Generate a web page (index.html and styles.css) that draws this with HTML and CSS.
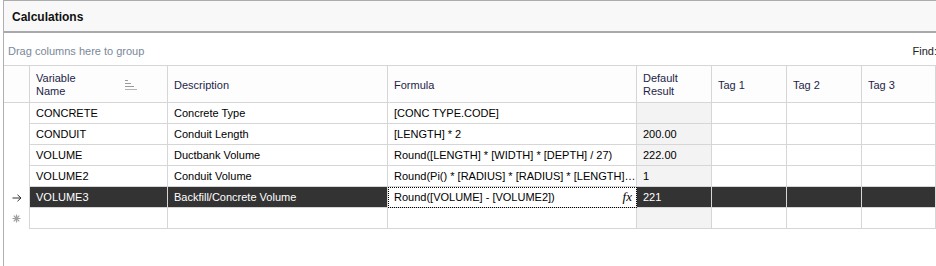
FILE: index.html
```html
<!DOCTYPE html>
<html lang="en">
<head>
  <meta charset="UTF-8" />
  <meta name="viewport" content="width=device-width, initial-scale=1.0" />
  <title>Calculations</title>
  <link rel="stylesheet" href="styles.css">
</head>
<body>
  <div class="panel">
    <div class="panel-title">Calculations</div>
    <div class="group-bar">
      <span class="group-hint">Drag columns here to group</span>
      <span class="find">Find:</span>
    </div>
    <div class="grid">
      <!-- header -->
      <div class="cell ind head"></div>
      <div class="cell head">
        <span>Variable<br />Name</span>
        <svg class="sort-icon" width="12" height="10" viewBox="0 0 12 10">
          <rect x="0" y="0" width="3" height="1" fill="#9a9a9a" />
          <rect x="0" y="3" width="6" height="1" fill="#9a9a9a" />
          <rect x="0" y="6" width="9" height="1" fill="#9a9a9a" />
          <rect x="0" y="9" width="12" height="1" fill="#b4b4b4" />
        </svg>
      </div>
      <div class="cell head">Description</div>
      <div class="cell head">Formula</div>
      <div class="cell head">Default<br />Result</div>
      <div class="cell head">Tag 1</div>
      <div class="cell head">Tag 2</div>
      <div class="cell head">Tag 3</div>

      <div class="cell ind"></div>
      <div class="cell">CONCRETE</div>
      <div class="cell">Concrete Type</div>
      <div class="cell">[CONC TYPE.CODE]</div>
      <div class="cell result"></div>
      <div class="cell"></div>
      <div class="cell"></div>
      <div class="cell"></div>

      <div class="cell ind"></div>
      <div class="cell">CONDUIT</div>
      <div class="cell">Conduit Length</div>
      <div class="cell">[LENGTH] * 2</div>
      <div class="cell result">200.00</div>
      <div class="cell"></div>
      <div class="cell"></div>
      <div class="cell"></div>

      <div class="cell ind"></div>
      <div class="cell">VOLUME</div>
      <div class="cell">Ductbank Volume</div>
      <div class="cell">Round([LENGTH] * [WIDTH] * [DEPTH] / 27)</div>
      <div class="cell result">222.00</div>
      <div class="cell"></div>
      <div class="cell"></div>
      <div class="cell"></div>

      <div class="cell ind"></div>
      <div class="cell">VOLUME2</div>
      <div class="cell">Conduit Volume</div>
      <div class="cell">Round(Pi() * [RADIUS] * [RADIUS] * [LENGTH]…</div>
      <div class="cell result">1</div>
      <div class="cell"></div>
      <div class="cell"></div>
      <div class="cell"></div>

      <div class="cell ind">
        <svg width="10" height="8" viewBox="0 0 10 8">
          <path d="M0.5 4H9M5.5 0.8L9 4L5.5 7.2" fill="none" stroke="#333" stroke-width="1" />
        </svg>
      </div>
      <div class="cell sel">VOLUME3</div>
      <div class="cell sel">Backfill/Concrete Volume</div>
      <div class="cell editing">
        <span>Round([VOLUME] - [VOLUME2])</span>
        <span class="fx">fx</span>
      </div>
      <div class="cell sel">221</div>
      <div class="cell sel"></div>
      <div class="cell sel"></div>
      <div class="cell sel"></div>

      <div class="cell ind last">
        <svg width="9" height="9" viewBox="0 0 9 9">
          <path d="M4.5 0.5V8.5M0.5 4.5H8.5M1.7 1.7L7.3 7.3M7.3 1.7L1.7 7.3" stroke="#a0a0a0" stroke-width="1.2" />
          <circle cx="4.5" cy="4.5" r="2" fill="#a0a0a0" />
        </svg>
      </div>
      <div class="cell"></div>
      <div class="cell"></div>
      <div class="cell"></div>
      <div class="cell result"></div>
      <div class="cell"></div>
      <div class="cell"></div>
      <div class="cell"></div>
    </div>
  </div>
</body>
</html>
```

FILE: styles.css
```css
body {
  margin: 0;
  background: #fff;
  font-family: Tahoma, "Liberation Sans", Arial, sans-serif;
  font-size: 11px;
  color: #000;
  overflow: hidden;
}
.panel {
  margin-left: 3px;
  border-left: 1px solid #b0b0b0;
  height: 266px;
}
.panel-title {
  height: 30px;
  line-height: 32px;
  padding-left: 8px;
  border-top: 1px solid #acacac;
  border-bottom: 2px solid #a9a9a9;
  background: #f8f8f8;
  font-weight: bold;
  font-size: 12px;
  color: #111;
}
.group-bar {
  display: flex;
  align-items: center;
  box-sizing: border-box;
  height: 33px;
  padding-left: 4px;
  padding-top: 3px;
  border-bottom: 1px solid #d6d6d6;
}
.group-hint {
  color: #7a8899;
}
.find {
  margin-left: auto;
  margin-right: -1px;
  color: #222;
}
.grid {
  display: grid;
  grid-template-columns: 26px 138px 220px 249px 75px 75px 75px 1fr;
  grid-template-rows: 37px;
  grid-auto-rows: 21px;
}
.cell {
  box-sizing: border-box;
  display: flex;
  align-items: center;
  padding-left: 6px;
  border-right: 1px solid #d6d6d6;
  border-bottom: 1px solid #d6d6d6;
  white-space: nowrap;
  overflow: hidden;
}
.head {
  line-height: 13px;
  padding-top: 2px;
  color: #1e1e48;
  background: #fdfdfd;
}
.sort-icon {
  margin-left: auto;
  margin-right: 30px;
}
.ind {
  border-bottom: none;
  justify-content: center;
  padding-left: 0;
}
.ind.head {
  border-bottom: 1px solid #d6d6d6;
}
.ind.last {
  border-bottom: none;
}
.result {
  background: #f3f3f3;
}
.sel {
  background: #333;
  color: #fff;
}
.editing {
  justify-content: space-between;
  padding-right: 4px;
  outline: 1px dotted #000;
  outline-offset: -1px;
}
.fx {
  font-family: "Liberation Serif", serif;
  font-style: italic;
  font-size: 13px;
}
```
